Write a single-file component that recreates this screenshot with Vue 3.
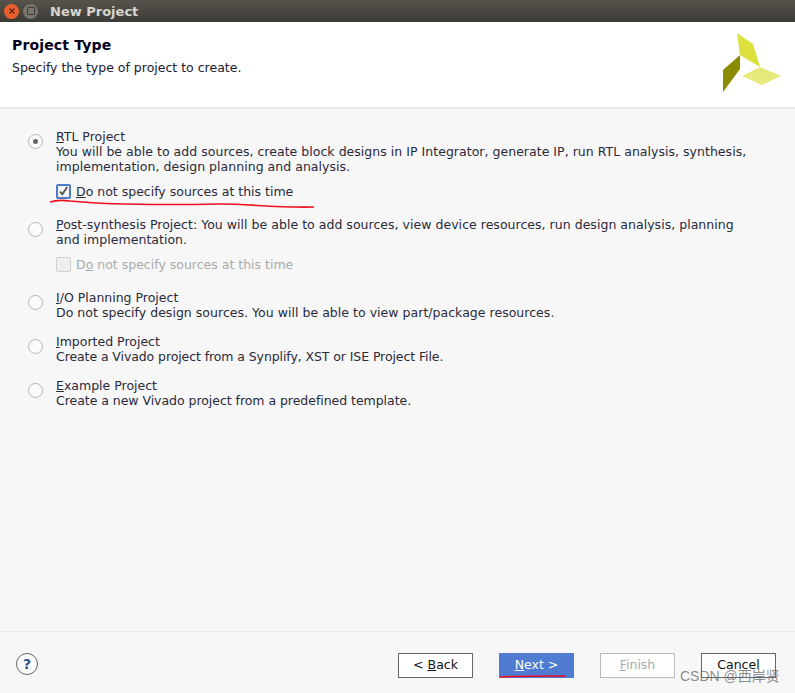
<script setup>
const options = [
  { key: 'R', rest: 'TL Project', desc: 'You will be able to add sources, create block designs in IP Integrator, generate IP, run RTL analysis, synthesis, implementation, design planning and analysis.', cls: 'o1', selected: true },
  { key: 'P', rest: 'ost-synthesis Project: You will be able to add sources, view device resources, run design analysis, planning and implementation.', desc: '', cls: 'o2' },
  { key: 'I', rest: '/O Planning Project', desc: 'Do not specify design sources. You will be able to view part/package resources.', cls: 'o3' },
  { key: 'I', rest: 'mported Project', desc: 'Create a Vivado project from a Synplify, XST or ISE Project File.', cls: 'o4' },
  { key: 'E', rest: 'xample Project', desc: 'Create a new Vivado project from a predefined template.', cls: 'o5' },
]
</script>

<template>
  <div class="win">
    <div class="titlebar">
      <span class="wbtn close">
        <svg width="8" height="8" viewBox="0 0 8 8"><path d="M1.5 1.5l5 5M6.5 1.5l-5 5" stroke="#5a2412" stroke-width="1.3" fill="none"/></svg>
      </span>
      <span class="wbtn max"><i></i></span>
      <span class="wtitle">New Project</span>
    </div>

    <header class="head">
      <div>
        <h1>Project Type</h1>
        <p>Specify the type of project to create.</p>
      </div>
      <svg class="logo" width="60" height="60" viewBox="0 0 60 60">
        <polygon points="15,1 31,12 38,35 18,23" fill="#dbe03c"/>
        <polygon points="18,23 18,37 1,60 1,38" fill="#8b8b00"/>
        <polygon points="38,35 59,44 40,53 20,44" fill="#e6ea7c"/>
      </svg>
    </header>

    <main class="body">
      <div v-for="o in options" :key="o.rest" class="opt" :class="o.cls">
        <span class="radio" :class="{ on: o.selected }"></span>
        <div class="otext">
          <div class="line title"><u>{{ o.key }}</u>{{ o.rest }}</div>
          <div v-if="o.desc" class="line desc">{{ o.desc }}</div>
          <label v-if="o.cls === 'o1'" class="check">
            <span class="box active">
              <svg width="12" height="12" viewBox="0 0 12 12"><path d="M2.2 6.6l2.6 3L10 1.6" stroke="#555" stroke-width="2" fill="none"/></svg>
            </span>
            <span><u>D</u>o not specify sources at this time</span>
          </label>
          <label v-if="o.cls === 'o2'" class="check disabled">
            <span class="box"></span>
            <span>D<u>o</u> not specify sources at this time</span>
          </label>
        </div>
      </div>
    </main>

    <footer class="foot">
      <span class="help">?</span>
      <div class="btns">
        <button class="btn"><span class="arrow">&lt;</span> <u>B</u>ack</button>
        <button class="btn primary"><u>N</u>ext <span class="arrow">&gt;</span></button>
        <button class="btn off"><u>F</u>inish</button>
        <button class="btn">Cancel</button>
      </div>
    </footer>

    <svg class="ink" width="795" height="693" viewBox="0 0 795 693">
      <path d="M50 202 C56 200 62 200 70 201 C110 205 170 205 220 204 C250 204 275 208 314 207" fill="none" stroke="#f01020" stroke-width="1.6"/>
      <path d="M500 677 C515 676 540 676 566 676" fill="none" stroke="#f01020" stroke-width="1.6"/>
    </svg>
    <div class="mark">CSDN @西岸贤</div>
  </div>
</template>

<style scoped>
.win {
  position: relative;
  width: 795px;
  height: 693px;
  overflow: hidden;
  display: flex;
  flex-direction: column;
  background: #f7f7f7;
  font-family: "DejaVu Sans", sans-serif;
  font-size: 12.5px;
  color: #2a2a3a;
}
.titlebar {
  height: 22px;
  flex: none;
  display: flex;
  align-items: center;
  padding-left: 4px;
  background: linear-gradient(#57534c, #3d3b36);
}
.wbtn {
  width: 15px;
  height: 15px;
  border-radius: 50%;
  display: flex;
  align-items: center;
  justify-content: center;
  margin-right: 4px;
}
.close { background: #e9602e; }
.max { background: #77746c; }
.max i { display: block; width: 6px; height: 6px; border: 1px solid #3f3d39; border-radius: 1px; }
.wtitle {
  margin-left: 8px;
  color: #d8d5cd;
  font-weight: 700;
  font-size: 13px;
}
.head {
  height: 85px;
  flex: none;
  box-sizing: border-box;
  background: #fff;
  display: flex;
  justify-content: space-between;
  padding: 16px 13px 0 12px;
}
.head h1 {
  margin: 0;
  font-size: 14px;
  font-weight: 700;
  color: #000018;
  line-height: 15px;
  letter-spacing: 0.15px;
}
.head p {
  margin: 7px 0 0;
  line-height: 15px;
  font-size: 12.5px;
  color: #201830;
}
.logo { margin-top: -6px; }
.body {
  flex: 1;
  border-top: 2px solid #e6e6e6;
  border-bottom: 1px solid #e8e8e8;
  padding: 0 40px 0 28px;
}
.opt { display: flex; align-items: flex-start; }
.o1 { margin-top: 19px; }
.o2 { margin-top: 18px; }
.o3 { margin-top: 18px; }
.o4 { margin-top: 14px; }
.o5 { margin-top: 14px; }
.radio {
  flex: none;
  box-sizing: border-box;
  width: 15px;
  height: 15px;
  margin-top: 5px;
  margin-right: 13px;
  border: 1px solid #b4b4b4;
  border-radius: 50%;
  background: #fbfbfb;
  display: flex;
  align-items: center;
  justify-content: center;
}
.o1 .radio { margin-top: 6px; }
.radio.on::after {
  content: "";
  width: 5px;
  height: 5px;
  border-radius: 50%;
  background: #666;
}
.otext { flex: 1; }
.line { line-height: 15px; }
.o1 .title { margin-top: 1px; }
.o1 .desc, .o3 .desc, .o2 .title { letter-spacing: 0.03px; }
.o4 .desc { letter-spacing: -0.09px; }
.o5 .desc { letter-spacing: -0.04px; }
.check {
  display: flex;
  align-items: center;
  height: 16px;
  margin-top: 9px;
  gap: 5px;
}
.box {
  box-sizing: border-box;
  width: 15px;
  height: 15px;
  border: 1px solid #d0d0d0;
  border-radius: 2px;
  background: #eee;
  display: flex;
  align-items: center;
  justify-content: center;
}
.box.active { border: 2px solid #4f7bc8; background: #f4f4f4; }
.disabled { color: #aaa; }
.foot {
  height: 61px;
  flex: none;
  position: relative;
  box-sizing: border-box;
  padding: 21px 0 0 398px;
}
.help {
  position: absolute;
  left: 16px;
  top: 21px;
  box-sizing: border-box;
  width: 22px;
  height: 22px;
  border: 1px solid #666;
  border-radius: 50%;
  background: #fbfbfb;
  color: #2f4f96;
  font: 700 14px/20px "DejaVu Sans", sans-serif;
  text-align: center;
}
.btns { display: flex; gap: 26px; }
.btn {
  box-sizing: border-box;
  width: 75px;
  height: 25px;
  padding: 0 0 2px;
  background: #fff;
  border: 1px solid #666;
  font-family: "DejaVu Sans", sans-serif;
  font-size: 12.5px;
  color: #111;
  border-radius: 0;
}
.primary { background: #4f7bd0; border-color: #4f7bd0; color: #fff; }
.off { border-color: #bbb; color: #aaa; }
.ink { position: absolute; left: 0; top: 0; pointer-events: none; }
.mark {
  position: absolute;
  left: 680px;
  top: 667px;
  color: rgba(110, 110, 110, 0.8);
  font: 14px/18px "Liberation Sans", "Noto Sans CJK SC", sans-serif;
}
</style>
